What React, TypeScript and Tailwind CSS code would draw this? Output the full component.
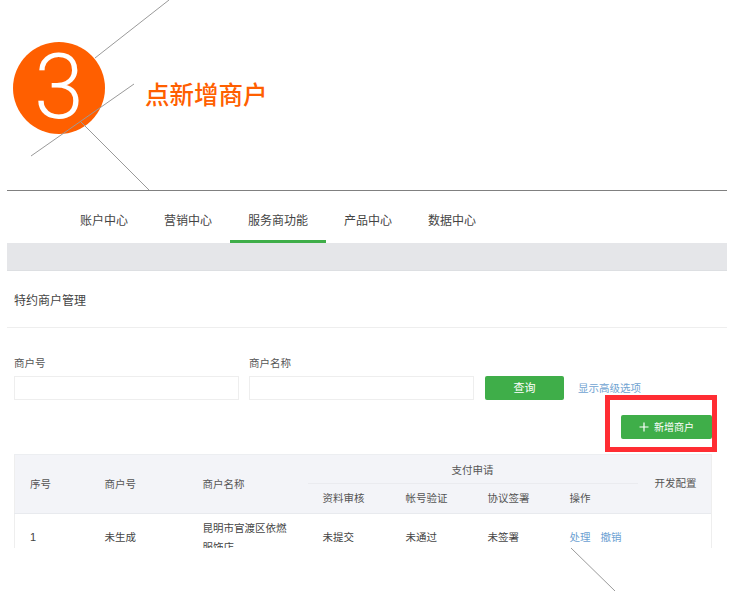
export default function App() {
  const font = { fontFamily: '"Liberation Sans", "Noto Sans CJK SC", sans-serif' };
  const tabs = ["账户中心", "营销中心", "服务商功能", "产品中心", "数据中心"];
  return (
    <div className="relative h-[591px] w-[734px] overflow-hidden bg-white text-[#444444]" style={font}>
      <div className="px-[7px]">
        <header className="flex h-[191px] items-start border-b border-[#808080]">
          <div className="ml-[6px] mt-[42px] flex h-[92px] w-[92px] items-center justify-center rounded-full bg-[#ff5f00]">
            <span className="text-[90px] font-light leading-none text-white" style={{ fontFamily: 'Roboto, "Liberation Sans", sans-serif' }}>3</span>
          </div>
          <h1 className="ml-[40px] mt-[81px] text-[24.5px] font-medium leading-[30px] text-[#ff5f00]">点新增商户</h1>
        </header>

        <nav className="flex h-[52px] pl-[55px]">
          {tabs.map((t, i) => (
            <div
              key={t}
              className={`flex h-[52px] items-center justify-center text-[12px] ${i === 2 ? "w-[96px] border-b-[3px] border-[#3fae49] pt-[10px]" : "w-[84px] pt-[7px]"}`}
            >
              {t}
            </div>
          ))}
        </nav>
        <div className="h-[28px] border-b border-[#dddfe2] bg-[#e5e6e9]" />

        <div className="flex h-[57px] items-center border-b border-[#eeeeee] pl-[7px] pt-[3px] text-[12px]">特约商户管理</div>

        <section className="relative px-[7px] pt-[28px]">
          <div className="flex items-end">
            <div className="w-[225px]">
              <div className="mb-[6px] text-[10.5px] leading-[14px] text-[#555555]">商户号</div>
              <div className="h-[24px] border border-[#eeeeee]" />
            </div>
            <div className="ml-[10px] w-[225px]">
              <div className="mb-[6px] text-[10.5px] leading-[14px] text-[#555555]">商户名称</div>
              <div className="h-[24px] border border-[#eeeeee]" />
            </div>
            <button className="ml-[11px] flex h-[24px] w-[79px] items-center justify-center rounded-[2px] bg-[#3fae49] text-[11px] text-white">查询</button>
            <a className="mb-[5px] ml-[14px] text-[10.5px] leading-[14px] text-[#6fa3d1]">显示高级选项</a>
          </div>
          <div className="mt-[15px] flex justify-end pr-[8px]">
            <button className="flex h-[24px] w-[91px] items-center justify-center gap-[5px] rounded-[2px] bg-[#3fae49] text-[10px] text-white">
              <svg width="10" height="10" viewBox="0 0 10 10" aria-hidden="true">
                <path d="M5 0.5V9.5M0.5 5H9.5" stroke="#ffffff" strokeWidth="1.2" fill="none" />
              </svg>
              新增商户
            </button>
          </div>

          <div className="mt-[15px] h-[94px] w-[698px] overflow-hidden border-r border-[#eeeeee]">
            <table className="w-[697px] table-fixed border-collapse border-l border-[#eeeeee] text-[10.5px] text-[#555555]">
              <colgroup>
                <col className="w-[75px]" />
                <col className="w-[98px]" />
                <col className="w-[120px]" />
                <col className="w-[83px]" />
                <col className="w-[82px]" />
                <col className="w-[82px]" />
                <col className="w-[157px]" />
              </colgroup>
              <thead className="bg-[#f3f4f8]">
                <tr className="h-[29px] border-t border-[#eceef1]">
                  <th rowSpan={2} className="pl-[15px] pt-[1px] text-left font-normal">序号</th>
                  <th rowSpan={2} className="pl-[15px] pt-[1px] text-left font-normal">商户号</th>
                  <th rowSpan={2} className="pl-[15px] pt-[1px] text-left font-normal">商户名称</th>
                  <th colSpan={4} className="pr-[74px] pt-[3px] text-center font-normal">支付申请</th>
                </tr>
                <tr className="h-[30px] border-b border-[#e8eaee]">
                  <th className="border-t border-[#eaebef] pl-[15px] pt-[1px] text-left font-normal">资料审核</th>
                  <th className="border-t border-[#eaebef] pl-[15px] pt-[1px] text-left font-normal">帐号验证</th>
                  <th className="border-t border-[#eaebef] pl-[15px] pt-[1px] text-left font-normal">协议签署</th>
                  <th className="relative pl-[15px] pt-[1px] text-left font-normal">
                    <span className="absolute left-0 top-[-1px] h-px w-[83px] bg-[#eaebef]" />
                    操作
                    <span className="absolute left-[100px] top-[-8px] whitespace-nowrap leading-[14px]">开发配置</span>
                  </th>
                </tr>
              </thead>
              <tbody>
                <tr className="align-top text-[#444444] leading-[18px]">
                  <td className="pl-[15px] pt-[14px] text-[11px]">1</td>
                  <td className="pl-[15px] pt-[14px]">未生成</td>
                  <td className="px-[15px] pt-[5px] leading-[19px]">昆明市官渡区依燃服饰店</td>
                  <td className="pl-[15px] pt-[14px]">未提交</td>
                  <td className="pl-[15px] pt-[14px]">未通过</td>
                  <td className="pl-[15px] pt-[14px]">未签署</td>
                  <td className="pl-[15px] pt-[14px] text-[#6c9fd2]">
                    <span>处理</span>
                    <span className="ml-[10px]">撤销</span>
                  </td>
                </tr>
              </tbody>
            </table>
          </div>
        </section>
      </div>

      <svg className="pointer-events-none absolute left-0 top-0" width="734" height="591" aria-hidden="true">
        <g stroke="#9a9a9a" strokeWidth="1" fill="none">
          <path d="M169 0L95 58" />
          <path d="M134 84L31 156" />
          <path d="M81 122L149 190" />
          <path d="M571 548L615 591" />
        </g>
      </svg>
      <div className="pointer-events-none absolute left-[605px] top-[395px] h-[57px] w-[112px] border-[5px] border-[#ff2d33]" />
    </div>
  );
}
